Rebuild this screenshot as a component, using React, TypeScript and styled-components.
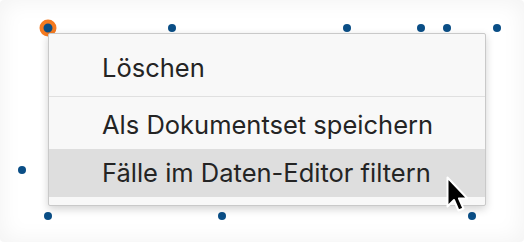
import React from 'react';
import styled, { createGlobalStyle } from 'styled-components';

const GlobalStyle = createGlobalStyle`
  html, body {
    margin: 0;
    padding: 0;
    background: #ffffff;
  }
  body {
    font-family: Inter, "Noto Sans", sans-serif;
  }
`;

interface Point {
  x: number;
  y: number;
  selected?: boolean;
}

// data points on the chart canvas
const points: Point[] = [
  { x: 48, y: 28, selected: true },
  { x: 172, y: 28 },
  { x: 347, y: 28 },
  { x: 421, y: 28 },
  { x: 447, y: 28 },
  { x: 497, y: 28 },
  { x: 22, y: 170 },
  { x: 48, y: 216 },
  { x: 222, y: 216 },
  { x: 472, y: 216 },
];

const items = [
  { label: 'Löschen', group: 0 },
  { label: 'Als Dokumentset speichern', group: 1 },
  { label: 'Fälle im Daten-Editor filtern', group: 1, active: true },
];

const App = () => {
  return (
    <>
      <GlobalStyle />
      <Canvas>
        {points.map((p, i) => (
          <Dot
            key={i}
            selected={!!p.selected}
            style={{ left: p.x, top: p.y }}
          />
        ))}
        <Menu>
          {items.map((item, i) => (
            <React.Fragment key={i}>
              {i > 0 && items[i - 1].group !== item.group && <Separator />}
              <MenuItem active={!!item.active}>{item.label}</MenuItem>
            </React.Fragment>
          ))}
        </Menu>
        <Cursor width="22" height="38" viewBox="0 0 22 38">
          <path
            d="M1.5 1.5 L1.5 30.5 L8 24 L12.5 34.5 L17.5 32.5 L13 22.5 L21.5 22.5 Z"
            fill="#000"
            stroke="#fff"
            strokeWidth="2"
            strokeLinejoin="round"
          />
        </Cursor>
      </Canvas>
    </>
  );
};

export default App;

const Canvas = styled.div`
  position: relative;
  width: 524px;
  height: 242px;
  overflow: hidden;
  background: #ffffff;
  box-shadow: inset 0 0 22px 2px rgba(0, 0, 0, 0.05);
  border-radius: 4px;
`;

const Dot = styled.div<{ selected: boolean }>`
  position: absolute;
  width: 8px;
  height: 8px;
  border-radius: 50%;
  background-color: #0a4e86;
  box-sizing: content-box;
  transform: translate(-50%, -50%);
  ${({ selected }) =>
    selected &&
    `
    width: 9px;
    height: 9px;
    border: 4px solid #f47a20;
  `}
`;

const Menu = styled.div`
  position: absolute;
  left: 48px;
  top: 33px;
  width: 438px;
  box-sizing: border-box;
  padding: 10px 0 8px 0;
  background: #f8f8f8;
  border: 1px solid #c9c9c9;
  border-radius: 2px;
  box-shadow: 0 3px 8px rgba(0, 0, 0, 0.18);
`;

const MenuItem = styled.div<{ active: boolean }>`
  height: 48px;
  line-height: 48px;
  padding-left: 53px;
  font-size: 25.5px;
  color: #242424;
  background-color: ${({ active }) => (active ? '#dedede' : 'transparent')};
  white-space: nowrap;
`;

const Separator = styled.div`
  height: 1px;
  margin: 4px 0;
  background: #e0e0e0;
`;

const Cursor = styled.svg`
  position: absolute;
  left: 446px;
  top: 176px;
`;
